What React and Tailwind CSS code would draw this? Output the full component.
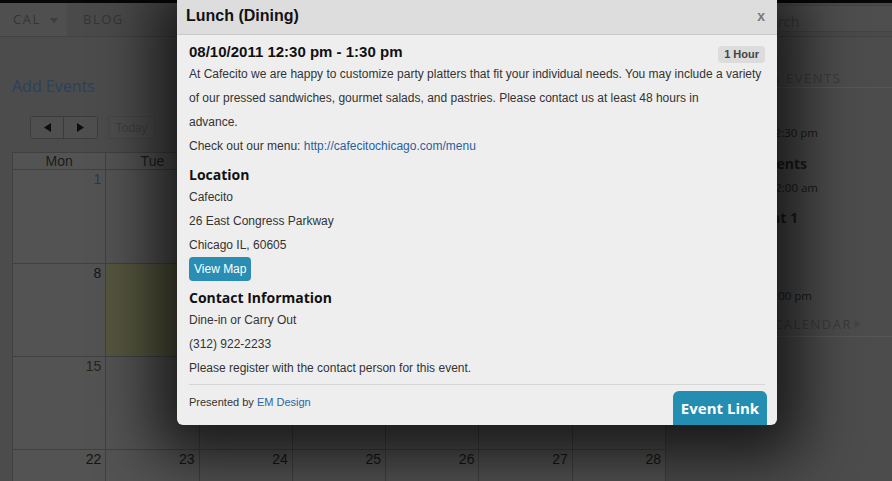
import React from "react";

const OPEN = "font-['Open_Sans',sans-serif]";

function Tri({ dir = "right", className = "", size = 8, color = "#111" }) {
  const pts = {
    right: "1,0 8,4.5 1,9",
    left: "8,0 1,4.5 8,9",
    down: "0,1 9,1 4.5,7",
  }[dir];
  return (
    <svg width={size} height={size} viewBox="0 0 9 9" className={className}>
      <polygon points={pts} fill={color} />
    </svg>
  );
}

const weeks = [
  [1, 2, 3, 4, 5, 6, 7],
  [8, 9, 10, 11, 12, 13, 14],
  [15, 16, 17, 18, 19, 20, 21],
  [22, 23, 24, 25, 26, 27, 28],
];
const rowH = ["h-[94px]", "h-[93px]", "h-[93px]", "h-[93px]"];
const days = ["Mon", "Tue", "Wed", "Thu", "Fri", "Sat", "Sun"];

function Calendar() {
  return (
    <div className="w-[654px] grid grid-cols-7 border-l border-t border-[#404040]">
      {days.map((d) => (
        <div
          key={d}
          className="h-[17px] border-r border-b border-[#404040] bg-[#535353] text-center text-[14px] leading-[16px] text-[#1c1c1c]"
        >
          {d}
        </div>
      ))}
      {weeks.map((w, ri) =>
        w.map((n, ci) => (
          <div
            key={n}
            className={`${rowH[ri]} border-r border-b border-[#404040] ${
              ri === 1 && ci === 1 ? "bg-[#55563f]" : "bg-[#535353]"
            } text-right pr-[4px] pt-[1px] text-[14px] leading-[16px] ${
              n === 1 ? "text-[#213a55]" : n === 15 ? "text-[#2a2318]" : "text-[#151515]"
            }`}
          >
            {n}
          </div>
        ))
      )}
    </div>
  );
}

function Sidebar() {
  return (
    <div className={`flex-1 ${OPEN} text-[#1a1a1a]`}>
      <div className="mt-[32px] h-[19px] text-[13px] leading-[18px] tracking-[1.5px] text-[#3a3a3a] border-b border-[#575757] whitespace-nowrap">
        UPCOMING EVENTS
      </div>
      <div className="mt-[9px] text-[14px] leading-[24px] font-bold whitespace-nowrap text-right pr-[125px]">Lunch</div>
      <div className="text-[11.5px] leading-[24px] whitespace-nowrap text-right pr-[74px]">Aug 10 @ 12:30 pm</div>
      <div className="mt-[7px] text-[14px] leading-[24px] font-bold whitespace-nowrap text-right pr-[85px]">Events</div>
      <div className="text-[11.5px] leading-[24px] whitespace-nowrap text-right pr-[74px]">Aug 11 @ 12:00 am</div>
      <div className="mt-[6px] text-[14px] leading-[24px] font-bold whitespace-nowrap text-right pr-[94px]">Event 1</div>
      <div className="text-[11px] leading-[22px] whitespace-nowrap text-right pr-[125px]">Cafecito</div>
      <div className="text-[11px] leading-[22px] whitespace-nowrap text-right pr-[125px]">Chicago</div>
      <div className="mt-[10px] text-[11.5px] leading-[24px] whitespace-nowrap text-right pr-[80px]">Aug 12 @ 5:00 pm</div>
      <div className="mt-[6px] pb-[2px] pr-[30px] border-b border-[#575757] flex items-center justify-end whitespace-nowrap text-[13px] leading-[20px] tracking-[1.5px] text-[#3a3a3a]">
        VIEW CALENDAR
        <Tri dir="right" size={8} color="#444" className="ml-[2px]" />
      </div>
    </div>
  );
}

function Modal() {
  const p1 = [
    "At Cafecito we are happy to customize party platters that fit your individual needs. You may include a variety",
    "of our pressed sandwiches, gourmet salads, and pastries. Please contact us at least 48 hours in",
    "advance.",
  ];
  return (
    <div className="absolute left-[177px] top-0 w-[600px] h-[425px] bg-[#eeeeee] rounded-b-[6px] shadow-[0_10px_60px_22px_rgba(0,0,0,0.7)] flex flex-col overflow-hidden">
      <div className="h-[35px] shrink-0 bg-[#dddddd] border-b border-[#c9c9c9] flex items-center justify-between pl-[9px] pr-[12px]">
        <div className="text-[16px] font-bold text-[#111] leading-[20px] mt-[-2px]">Lunch (Dining)</div>
        <div className="text-[14px] font-bold text-[#7a7a7a] leading-[16px] mt-[-2px]">x</div>
      </div>
      <div className="flex-1 flex flex-col px-[12px] pt-[7px] text-[12px] text-[#333]">
        <div className="flex items-center justify-between h-[20px]">
          <div className="text-[15px] font-bold text-[#111] leading-[20px]">08/10/2011 12:30 pm - 1:30 pm</div>
          <div className="h-[17px] px-[6px] rounded-[4px] bg-[#dcdcdc] text-[11px] font-bold text-[#444] leading-[17px] mt-[5px]">
            1 Hour
          </div>
        </div>
        <div className="leading-[24px]">
          {p1.map((l) => (
            <div key={l} className="whitespace-nowrap">{l}</div>
          ))}
        </div>
        <div className="leading-[24px] whitespace-nowrap">
          Check out our menu: <span className="text-[#2a5f9e]">http://cafecitochicago.com/menu</span>
        </div>
        <div className={`mt-[7px] ${OPEN} text-[14px] font-bold leading-[20px] text-[#111]`}>Location</div>
        <div className="leading-[24px]">Cafecito</div>
        <div className="leading-[24px]">26 East Congress Parkway</div>
        <div className="leading-[24px]">Chicago IL, 60605</div>
        <div>
          <span className="inline-block h-[24px] px-[5px] rounded-[4px] bg-[#2a8db3] text-white text-[12px] leading-[24px]">
            View Map
          </span>
        </div>
        <div className={`mt-[7px] ${OPEN} text-[14px] font-bold leading-[20px] text-[#111]`}>Contact Information</div>
        <div className="leading-[24px]">Dine-in or Carry Out</div>
        <div className="leading-[24px]">(312) 922-2233</div>
        <div className="leading-[24px]">Please register with the contact person for this event.</div>
        <div className="mt-[4px] h-px bg-[#d6d6d6]" />
        <div className="flex justify-between items-start">
          <div className="mt-[10px] text-[11px] leading-[14px] text-[#333]">
            Presented by <span className="text-[#2a65a8]">EM Design</span>
          </div>
          <div
            className={`mt-[6px] -mr-[2px] w-[94px] h-[34px] rounded-t-[6px] bg-[#238db2] text-white ${OPEN} text-[15px] font-bold leading-[34px] text-center`}
          >
            Event Link
          </div>
        </div>
      </div>
    </div>
  );
}

export default function App() {
  return (
    <div className="relative w-[892px] h-[481px] overflow-hidden bg-[#4c4c4c] font-['Liberation_Sans',Arial,sans-serif]">
      <div className="h-[3px] bg-[#070707]" />
      <div className={`h-[34px] flex items-stretch bg-[#4a4a4a] border-b border-[#414141] ${OPEN}`}>
        <div className="w-[67px] bg-[#4f4f4f] flex items-center pl-[13px] text-[13px] tracking-[1.5px] text-[#353535]">
          CAL
          <Tri dir="down" size={8} color="#3c3c3c" className="ml-[9px] mt-[3px]" />
        </div>
        <div className="flex items-center pl-[16px] text-[13px] tracking-[1.5px] text-[#353535]">BLOG</div>
        <div className="ml-auto mt-[2px] mb-[4px] w-[147px] bg-[#4e4e4e] border-y border-[#444] flex items-center pl-[10px] pt-[6px] text-[14px] text-[#3b3b3b]">
          Search
        </div>
      </div>
      <div className="flex">
        <div className="w-[666px] pl-[12px]">
          <div className={`mt-[38px] ${OPEN} text-[16px] leading-[22px] text-[#28425f]`}>Add Events</div>
          <div className="mt-[19px] ml-[18px] flex">
            <div className="flex border border-[#3b3b3b] rounded-[2px]">
              <div className="w-[33px] h-[21px] bg-[#4f4f4f] border-r border-[#3b3b3b] flex items-center justify-center">
                <Tri dir="left" size={9} color="#0d0d0d" />
              </div>
              <div className="w-[33px] h-[21px] bg-[#4f4f4f] flex items-center justify-center">
                <Tri dir="right" size={9} color="#0d0d0d" />
              </div>
            </div>
            <div className="ml-[10px] w-[47px] h-[23px] border border-[#464646] rounded-[2px] bg-[#4d4d4d] flex items-center justify-center text-[12px] text-[#3e3e3e]">
              Today
            </div>
          </div>
          <div className="mt-[13px]">
            <Calendar />
          </div>
        </div>
        <div className="ml-[33px] flex-1">
          <Sidebar />
        </div>
      </div>
      <Modal />
    </div>
  );
}
